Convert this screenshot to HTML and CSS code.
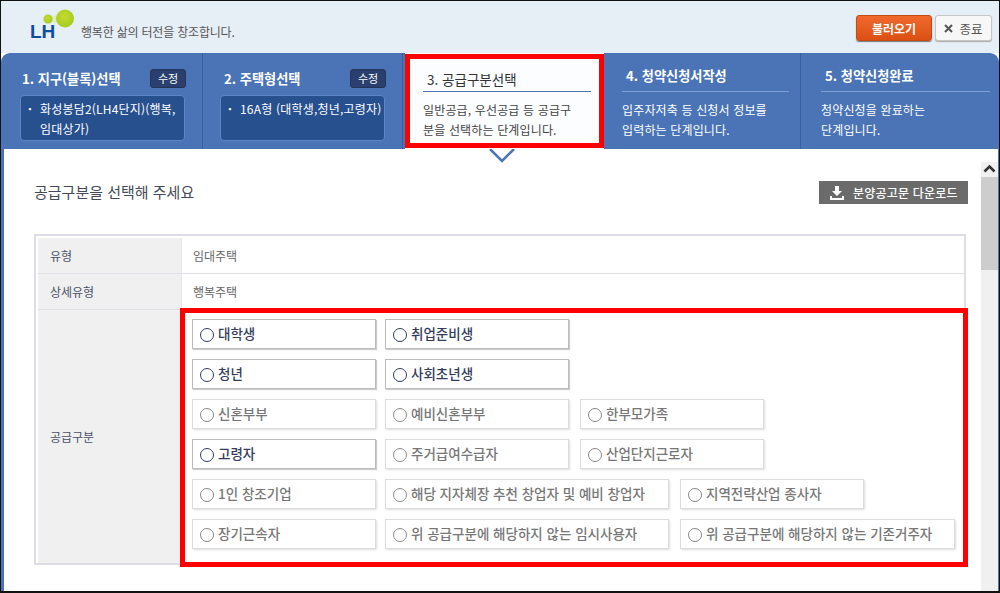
FILE: index.html
```html
<!DOCTYPE html>
<html lang="ko">
<head>
<meta charset="utf-8">
<title>공급구분선택</title>
<link rel="stylesheet" href="styles.css">
</head>
<body>
<div class="frame">
  <header class="top">
    <div class="brand">
      <div class="logo">
        <svg class="bubbles" width="34" height="24" viewBox="0 0 34 24"><defs><radialGradient id="g" cx="45%" cy="40%" r="70%"><stop offset="0" stop-color="#c4dc30"/><stop offset="1" stop-color="#a0c81c"/></radialGradient></defs><path d="M5 10 Q13 13 22 5 L22 22 Q13 15 5 18Z" fill="#dcebb0" opacity=".7"/><circle cx="5" cy="14" r="4.5" fill="url(#g)"/><circle cx="22" cy="13.5" r="9" fill="url(#g)"/></svg>
        <span class="lh">LH</span>
      </div>
      <span class="slogan">행복한 삶의 터전을 창조합니다.</span>
    </div>
    <div class="actions">
      <button class="load">불러오기</button>
      <button class="close"><svg width="9" height="9" viewBox="0 0 9 9"><path d="M1 1l7 7M8 1L1 8" stroke="#555" stroke-width="2" fill="none"/></svg> 종료</button>
    </div>
  </header>
  <nav class="steps">
    <section class="step s1">
      <div class="head"><h2>1. 지구(블록)선택</h2><span class="edit">수정</span></div>
      <div class="picked"><span class="dot">·</span><span>화성봉담2(LH4단지)(행복, 임대상가)</span></div>
    </section>
    <section class="step s2">
      <div class="head"><h2>2. 주택형선택</h2><span class="edit">수정</span></div>
      <div class="picked"><span class="dot">·</span><span class="nowrap">16A형 (대학생,청년,고령자)</span></div>
    </section>
    <section class="step s3 current">
      <h2>3. 공급구분선택</h2>
      <p>일반공급, 우선공급 등 공급구<br>분을 선택하는 단계입니다.</p>
    </section>
    <section class="step s4">
      <h2>4. 청약신청서작성</h2>
      <p>입주자저축 등 신청서 정보를<br>입력하는 단계입니다.</p>
    </section>
    <section class="step s5">
      <h2>5. 청약신청완료</h2>
      <p>청약신청을 완료하는<br>단계입니다.</p>
    </section>
  </nav>
  <main class="body">
    <div class="content">
      <div class="title-row">
        <h1>공급구분을 선택해 주세요</h1>
        <button class="download">
          <svg width="16" height="14" viewBox="0 0 16 14"><path d="M6 0h4v5h3L8 10 3 5h3z" fill="#fff"/><path d="M1 10h2v2h10v-2h2v4H1z" fill="#fff"/></svg>
          분양공고문 다운로드
        </button>
      </div>
      <div class="table">
        <div class="row r1"><div class="th">유형</div><div class="td text">임대주택</div></div>
        <div class="row r2"><div class="th">상세유형</div><div class="td text">행복주택</div></div>
        <div class="row r3"><div class="th">공급구분</div>
          <div class="td options">
            <div class="opts"><label class="opt on w184">대학생</label><label class="opt on w184">취업준비생</label></div>
            <div class="opts"><label class="opt on w184">청년</label><label class="opt on w184">사회초년생</label></div>
            <div class="opts"><label class="opt w184">신혼부부</label><label class="opt w184">예비신혼부부</label><label class="opt w184">한부모가족</label></div>
            <div class="opts"><label class="opt on w184">고령자</label><label class="opt w184">주거급여수급자</label><label class="opt w184">산업단지근로자</label></div>
            <div class="opts"><label class="opt w184">1인 창조기업</label><label class="opt w284">해당 지자체장 추천 창업자 및 예비 창업자</label><label class="opt w184">지역전략산업 종사자</label></div>
            <div class="opts"><label class="opt w184">장기근속자</label><label class="opt w284">위 공급구분에 해당하지 않는 임시사용자</label><label class="opt w275">위 공급구분에 해당하지 않는 기존거주자</label></div>
          </div>
        </div>
      </div>
    </div>
    <div class="scrollbar">
      <svg class="up" width="17" height="15" viewBox="0 0 17 15"><path d="M3.5 9.5l5-5 5 5" fill="none" stroke="#333" stroke-width="2.6"/></svg>
      <div class="thumb"></div>
    </div>
  </main>
  <div class="pointer"><svg width="28" height="14" viewBox="0 0 28 14"><path d="M2 0l12 12L26 0" fill="#fff" stroke="#4a74b6" stroke-width="2.5"/></svg></div>
  <div class="mark mark-step"></div>
  <div class="mark mark-opts"></div>
</div>
</body>
</html>
```
FILE: styles.css
```css
* { box-sizing: border-box; }
html, body { margin: 0; padding: 0; background: #fff; }
body { width: 1000px; height: 593px; overflow: hidden; font-family: "Noto Sans CJK KR", "Noto Sans", sans-serif; }
h1, h2, p { margin: 0; font-weight: normal; }
button { font-family: inherit; cursor: pointer; }
.frame { position: relative; width: 1000px; height: 593px; border: 1px solid #111; border-bottom-width: 2px; display: flex; flex-direction: column; background: #fff; overflow: hidden; }

.top { height: 52px; flex: none; background: #e6eef6; display: flex; justify-content: space-between; padding: 14px 0 0 29px; }
.brand { display: flex; align-items: flex-end; height: 24px; }
.logo { position: relative; width: 51px; height: 32px; margin-top: -8px; align-self: flex-start; }
.bubbles { position: absolute; left: 13px; top: -2px; }
.lh { position: absolute; left: 0; top: 16px; font: bold 19px/18px "Liberation Sans", sans-serif; color: #0d4f9e; }
.slogan { font-size: 12px; line-height: 16px; color: #555; margin-bottom: -1px; letter-spacing: -.2px; }
.actions { display: flex; gap: 3px; padding-right: 7px; }
.load { width: 76px; height: 26px; padding: 0; border: 1px solid #c24a14; border-radius: 3px; background: linear-gradient(#f06a2c, #dc4f14); color: #fff; font-size: 12px; font-weight: 700; box-shadow: 0 1px 1px #777; }
.close { width: 57px; height: 26px; padding: 0; border: 1px solid #c6c6c6; border-radius: 3px; background: #f7f7f7; color: #555; font-size: 12.5px; box-shadow: 0 1px 1px #aaa; display: flex; align-items: center; justify-content: center; gap: 6px; }

.steps { height: 96px; flex: none; display: flex; background: #4a74b6; border-radius: 9px 9px 0 0; }
.step { flex: none; color: #fff; }
.s1 { width: 202px; padding: 16px 0 0 19px; border-right: 1px solid #39609c; }
.s2 { width: 200px; padding: 16px 0 0 17px; border-right: 1px solid #39609c; }
.s3 { width: 199px; padding: 0 13px 0 18px; margin-left: 2px; background: #fbfdff; color: #444; }
.s4 { width: 197px; padding: 0 11px 0 18px; border-right: 1px solid #39609c; }
.s5 { width: 198px; padding: 0 9px 0 20px; }
.step h2 { font-size: 13.2px; line-height: 20px; font-weight: 700; }
.head { display: flex; justify-content: space-between; align-items: center; width: 166px; height: 19px; }
.s1 .head h2 { padding-left: 2px; }
.s2 .head h2 { padding-left: 4px; }
.s3 h2, .s4 h2, .s5 h2 { padding: 13px 0 6px 4px; border-bottom: 1px solid #7ea0d4; height: 39px; box-sizing: border-box; }
.s3 h2 { font-weight: 400; font-size: 13.5px; color: #333; border-bottom-color: #4a74b6; padding-top: 16px; }
.step p { font-size: 12px; line-height: 20px; margin-top: 8px; letter-spacing: .15px; }
.edit { width: 36px; height: 19px; background: #2a3f6e; border: 1px solid #243558; border-radius: 3px; font-size: 11px; line-height: 17px; text-align: center; }
.picked { display: flex; width: 165px; height: 46px; margin-top: 7px; padding: 3px 0 0 7px; background: #27508f; border: 1px solid #5d86c5; border-radius: 4px; font-size: 12px; line-height: 20px; letter-spacing: .2px; }
.dot { width: 12px; flex: none; font-weight: 700; }
.nowrap { white-space: nowrap; }

.body { flex: 1; min-height: 0; display: flex; border: solid #4a74b6; border-width: 0 1px 0 3px; }
.content { flex: 1; min-width: 0; padding: 0 13px 0 30px; }
.title-row { display: flex; justify-content: space-between; align-items: flex-start; height: 85px; }
h1 { font-size: 15px; line-height: 22px; color: #444b5c; margin-top: 32px; }
.download { display: flex; align-items: center; gap: 8px; margin: 32px 0 0; width: 149px; height: 23px; padding: 0 0 0 10px; background: #6b6b6b; border: 0; color: #fff; font-size: 12px; font-weight: 500; white-space: nowrap; letter-spacing: .2px; }

.table { width: 932px; height: 331px; border: 2px solid #dcdde6; padding: 2px 0 0 2px; }
.row { display: flex; border-bottom: 1px solid #e0e1e6; }
.r1, .r2 { height: 36px; }
.r3 { height: 253px; border-bottom: 0; }
.th { width: 144px; flex: none; background: #f0f0f0; color: #4a5268; font-size: 12px; padding-left: 12px; display: flex; align-items: center; border-right: 1px solid #e6e6e6; }
.td { flex: 1; }
.text { font-size: 12px; color: #666; padding-left: 11px; display: flex; align-items: center; }
.options { padding: 9px 0 0 10px; display: flex; flex-direction: column; gap: 10px; }
.opts { display: flex; height: 30px; }
.opt { position: relative; flex: none; height: 30px; background: #fff; border: 1px solid #dcdcdc; box-shadow: 1px 1px 2px #ddd; font-size: 13.5px; line-height: 27px; padding-left: 25px; color: #777; font-weight: 500; white-space: nowrap; margin-right: 9px; }
.opt + .opt { margin-right: 11px; }
.opt::before { content: ""; position: absolute; left: 7px; top: 8px; width: 12px; height: 12px; border: 1px solid #888; border-radius: 50%; }
.opt.on { border-color: #bbb; color: #333c5c; font-weight: 500; box-shadow: 1px 1px 1px #ccc; }
.opt.on::before { border-color: #333c5c; }
.w184 { width: 184px; }
.w284 { width: 284px; }
.w275 { width: 275px; }

.scrollbar { width: 17px; flex: none; margin-top: 13px; background: #f0f0f0; }
.up { display: block; }
.thumb { height: 93px; background: #cdcdcd; }

.pointer { position: absolute; left: 487px; top: 148px; width: 28px; height: 14px; line-height: 0; }
.mark { position: absolute; border: 5px solid #f00; pointer-events: none; }
.mark-step { left: 404px; top: 53px; width: 199px; height: 94px; }
.mark-opts { left: 179px; top: 307px; width: 788px; height: 259px; }
```
